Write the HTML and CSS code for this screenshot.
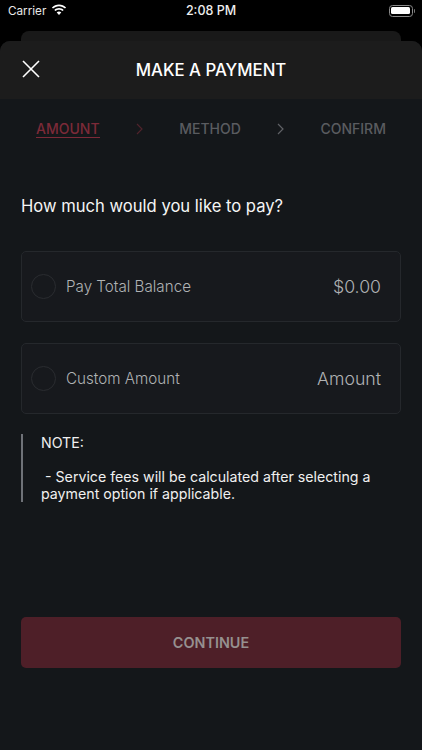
FILE: index.html
```html
<!DOCTYPE html>
<html lang="en">
<head>
    <meta charset="UTF-8">
    <meta name="viewport" content="width=device-width, initial-scale=1.0">
    <title>Make a Payment</title>
    <link rel="stylesheet" href="styles.css">
</head>
<body>

<div class="status-bar">
    <div class="status-left">
        <span class="carrier">Carrier</span>
        <svg class="wifi-icon" width="16" height="12" viewBox="0 0 16 12">
            <path d="M8 2.2c2.3 0 4.4.9 6 2.4l1.1-1.2C13.2 1.6 10.7.5 8 .5S2.800 1.600.9 3.400L2 4.600c1.600-1.500 3.700-2.400 6-2.400z" fill="#fff"/>
            <path d="M8 5.700c1.300 0 2.500.5 3.500 1.400l1.200-1.200C11.400 4.700 9.800 4 8 4s-3.400.7-4.700 1.900l1.200 1.200c1-.9 2.200-1.400 3.500-1.400z" fill="#fff"/>
            <path d="M8 7.500c-.9 0-1.700.3-2.300.9L8 11l2.300-2.600c-.6-.6-1.400-.9-2.300-.9z" fill="#fff"/>
        </svg>
    </div>
    <span class="status-time">2:08 PM</span>
    <div class="battery">
        <div class="battery-body"><div class="battery-fill"></div></div>
        <div class="battery-cap"></div>
    </div>
</div>

<div class="back-card"></div>

<div class="sheet">
    <div class="sheet-header">
        <button class="close-btn" aria-label="Close">
            <svg width="20" height="20" viewBox="0 0 20 20">
                <path d="M2 2L18 18M18 2L2 18" stroke="#fff" stroke-width="1.600" fill="none"/>
            </svg>
        </button>
        <h1>MAKE A PAYMENT</h1>
    </div>

    <div class="sheet-body">
        <div class="steps">
            <span class="step step-active">AMOUNT</span>
            <svg class="chevron" width="7" height="12" viewBox="0 0 7 12">
                <path d="M1 1L6 6L1 11" stroke="#4f232b" stroke-width="1.200" fill="none"/>
            </svg>
            <span class="step">METHOD</span>
            <svg class="chevron" width="7" height="12" viewBox="0 0 7 12">
                <path d="M1 1L6 6L1 11" stroke="#5f6165" stroke-width="1.200" fill="none"/>
            </svg>
            <span class="step">CONFIRM</span>
        </div>

        <h2>How much would you like to pay?</h2>

        <div class="option">
            <div class="radio"></div>
            <span class="option-label">Pay Total Balance</span>
            <span class="option-value">$0.00</span>
        </div>

        <div class="option">
            <div class="radio"></div>
            <span class="option-label">Custom Amount</span>
            <span class="option-value">Amount</span>
        </div>

        <div class="note">
            <p>NOTE:</p>
            <p class="note-text">&nbsp;- Service fees will be calculated after selecting a payment option if applicable.</p>
        </div>

        <button class="continue-btn">CONTINUE</button>
    </div>
</div>

</body>
</html>
```

FILE: styles.css
```css
* {
    box-sizing: border-box;
}

html, body {
    height: 100%;
}

body {
    font-family: Inter, 'Liberation Sans', sans-serif;
    background-color: #000;
    margin: 0;
    color: #fff;
    display: flex;
    flex-direction: column;
    overflow: hidden;
}

.status-bar {
    height: 31px;
    padding: 0 8px;
    display: grid;
    grid-template-columns: 1fr auto 1fr;
    align-items: center;
    padding-bottom: 10px;
    flex-shrink: 0;
}

.status-left {
    display: flex;
    align-items: center;
    gap: 5px;
}

.carrier {
    font-size: 11.700px;
    color: #e8e8e8;
}

.wifi-icon {
    margin-top: -2px;
}

.status-time {
    font-size: 12.500px;
    font-weight: 500;
    color: #eee;
}

.battery {
    justify-self: end;
    display: flex;
    align-items: center;
    gap: 1px;
    margin-right: -1px;
}

.battery-body {
    width: 24px;
    height: 12px;
    border: 1px solid #8a8a8a;
    border-radius: 3.5px;
    padding: 1.5px;
}

.battery-fill {
    height: 100%;
    background: #fff;
    border-radius: 1.500px;
}

.battery-cap {
    width: 1.500px;
    height: 4px;
    background: #777;
    border-radius: 0 1px 1px 0;
}

.back-card {
    height: 10px;
    margin: 0 21px;
    background: #191919;
    border-radius: 8px 8px 0 0;
    flex-shrink: 0;
}

.sheet {
    flex: 1;
    display: flex;
    flex-direction: column;
    border-radius: 10px 10px 0 0;
    overflow: hidden;
    background: #14171a;
}

.sheet-header {
    height: 58px;
    background: #1c1c1c;
    display: flex;
    align-items: center;
    justify-content: center;
    position: relative;
    flex-shrink: 0;
    padding-bottom: 1px;
}

.sheet-header h1 {
    margin: 0;
    font-size: 16.800px;
    font-weight: 500;
    color: #fff;
}

.close-btn {
    position: absolute;
    left: 21px;
    top: 18px;
    width: 20px;
    height: 20px;
    padding: 0;
    border: none;
    background: none;
    display: flex;
}

.sheet-body {
    flex: 1;
    display: flex;
    flex-direction: column;
    padding: 0 21px;
}

.steps {
    display: flex;
    align-items: center;
    justify-content: space-between;
    margin: 20px 15px 0;
    height: 19px;
}

.step {
    font-size: 14px;
    font-weight: 500;
    color: #5a5c60;
}

.step-active {
    color: #7c2a38;
    border-bottom: 1px solid #7c2a38;
    line-height: 17px;
}

h2 {
    margin: 58px 0 0;
    font-size: 16.600px;
    line-height: 21px;
    font-weight: 400;
    color: #f5f5f5;
}

.option {
    height: 71px;
    margin-top: 34px;
    padding: 0 19px 0 9px;
    display: flex;
    align-items: center;
    background: #17191d;
    border: 1px solid #25282c;
    border-radius: 5px;
}

.option + .option {
    margin-top: 21px;
}

.radio {
    width: 25px;
    height: 25px;
    border: 1px solid #2a2c30;
    border-radius: 50%;
    margin-right: 10px;
}

.option-label {
    flex: 1;
    font-size: 15.200px;
    font-weight: 300;
    color: #b0b2b4;
}

.option-value {
    font-size: 17.700px;
    font-weight: 300;
    color: #b0b2b4;
}

.note {
    margin-top: 20px;
    padding: 0 0 0 18px;
    border-left: 2px solid #6f7278;
    font-size: 14.200px;
    line-height: 17px;
    color: #f0f0f0;
}

.note p {
    margin: 0;
}

.note-text {
    padding-top: 17px;
}

.continue-btn {
    margin-top: 115px;
    height: 51px;
    background: #4e1f28;
    border: none;
    border-radius: 5px;
    font-family: inherit;
    font-size: 14.400px;
    font-weight: 600;
    color: #96908f;
}
```
